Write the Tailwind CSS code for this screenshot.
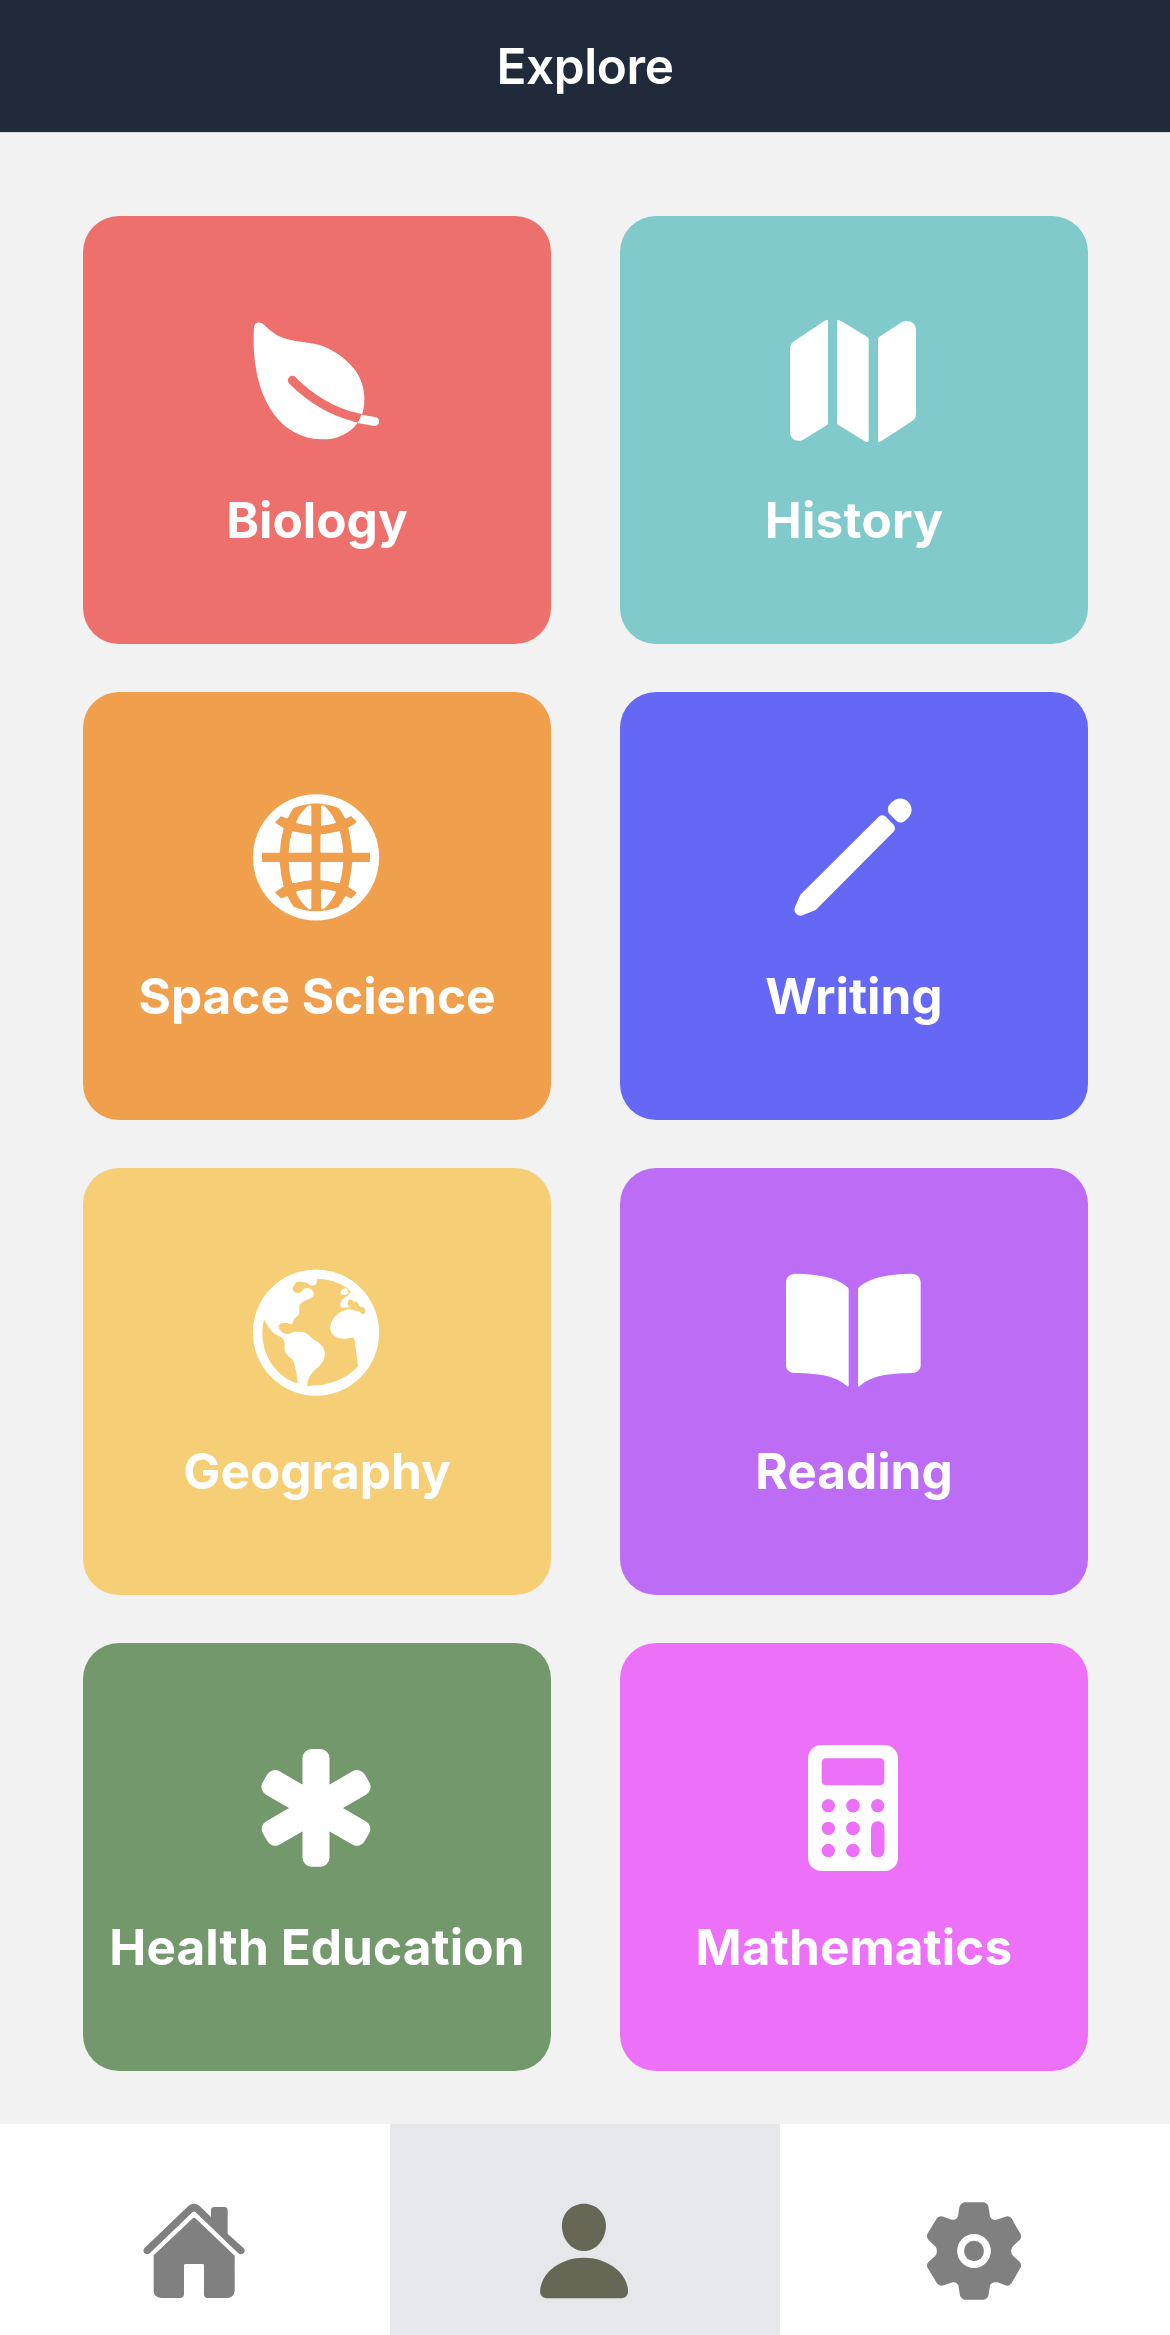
<!DOCTYPE html>
<html lang="en">
<head>
<meta charset="utf-8">
<title>Explore</title>
<script src="https://cdn.jsdelivr.net/npm/@tailwindcss/browser@4"></script>
</head>
<body class="flex h-[2335px] w-[1170px] flex-col overflow-hidden bg-[#f2f2f2] font-['Inter',sans-serif] text-[49.5px] leading-[60px] text-white">
<header class="flex h-[133px] shrink-0 items-center justify-center border-b border-[#d8d8da] bg-[#202a3a]">
  <h1 class="font-semibold tracking-[-0.4px]">Explore</h1>
</header>

<main class="grid flex-1 grid-cols-[468px_468px] content-start gap-x-[69px] gap-y-12 pl-[83px] pt-[83.33px] font-bold">
  <section class="flex h-[427.67px] flex-col items-center gap-[40px] rounded-[36px] bg-[#ed706d] pt-[89.67px]">
    <svg class="size-36 shrink-0" viewBox="555 348 432 432" fill="none">
      <path fill="#fff" d="M582 412C583 397 600 392 612 404C638 430 661 445 704 452C756 460 780 460 817 482C875 515 913 562 913 625C913 645 911 659 906 674L893 698C868 732 830 748 788 748C726 747 679 721 643 674C594 609 576 515 582 412Z"/>
      <path stroke="#ed706d" stroke-width="27" stroke-linecap="round" d="M697 571Q783 657 888 682"/>
      <path fill="#ed706d" d="M884 667L906 673L893 698L878 694Z"/>
      <path fill="#fff" d="M905 674L945 681A13.500 13.500 0 0 1 943 708L893 699Z"/>
    </svg>
    <h2>Biology</h2>
  </section>

  <section class="flex h-[427.67px] flex-col items-center gap-[40px] rounded-[36px] bg-[#81cacb] pt-[89.67px]">
    <svg class="size-36 shrink-0" viewBox="546 348 432 432" fill="#fff">
      <path d="M674 392Q679 389 684 390V700Q684 703 680 706L612 748C594 759 570 749 570 727V476Q570 462 582 454Z"/>
      <path d="M711 390Q716 389 722 392L802 441Q806 444 806 448V754Q802 758 797 755L715 705Q711 702 711 698Z"/>
      <path d="M834 447Q834 443 838 440L905 397C924 386 948 397 948 419V671Q948 684 938 692L843 754Q837 758 834 754Z"/>
    </svg>
    <h2 class="tracking-[0.25px]">History</h2>
  </section>

  <section class="flex h-[427.67px] flex-col items-center gap-[40px] rounded-[36px] bg-[#f09f4c] pt-[89.67px]">
    <svg class="size-36 shrink-0" viewBox="555 335 432 432" fill="none">
      <circle cx="768" cy="561" r="189.500" fill="#fff"/>
      <g fill="#f09f4c">
        <path d="M754 400H782V722H754Z"/>
        <rect x="606" y="547" width="324" height="28" rx="3"/>
        <g id="globe-cap">
          <path d="M701 413Q768 386 836 413Q845 424 854 442Q856 445 860 444L873 437L889 453Q889 456 888 457L865 472Q873 510 877 548H850Q847 512 839 483Q768 503 697 483Q688 512 686 548H659Q662 507 671 474L646 457V454L663 438L677 443Q682 446 685 440Q693 424 701 413Z"/>
          <path fill="#fff" d="M754 406V466Q731 465 711 459Q707 458 709 454Q723 422 747 405ZM783 406V466Q805 465 825 459Q829 458 827 454Q811 421 790 405ZM697 483L754 494V543Q754 547 751 547H687Q688 514 697 483ZM839 483L782 494V543Q782 547 786 547H849Q848 514 839 483Z"/>
        </g>
        <use href="#globe-cap" transform="matrix(1 0 0 -1 0 1122)"/>
        <path d="M686 547H850V575H686Z"/>
      </g>
    </svg>
    <h2>Space Science</h2>
  </section>

  <section class="flex h-[427.67px] flex-col items-center gap-[40px] rounded-[36px] bg-[#6567f5] pt-[89.67px]">
    <svg class="size-36 shrink-0" viewBox="66 35 432 432" fill="#fff">
      <path d="M356 139Q366 131 376 138L401 163Q408 173 402 183L167 419L128 435C114 440 98 425 105 410L121 373Z"/>
      <path d="M395 96C411 80 431 81 445 95C459 110 458 130 442 145L434 152Q422 161 410 152L388 130Q379 118 387 105Z"/>
    </svg>
    <h2>Writing</h2>
  </section>

  <section class="flex h-[427.67px] flex-col items-center gap-[40px] rounded-[36px] bg-[#f6ce76] pt-[89.67px]">
    <svg class="size-36 shrink-0" viewBox="45 22 432 432">
      <circle cx="258" cy="249" r="189.500" fill="#fff"/>
      <g fill="#f6ce76">
        <path d="M261 87Q313 88 354 116L356 121L363 126L359 136Q349 140 341 149C333 155 329 161 331 168C333 177 346 174 356 173C366 172 369 183 382 183C389 184 391 192 398 193C406 193 408 184 404 176C400 169 391 173 387 169C385 162 382 156 374 156C366 157 368 171 359 170C350 169 357 157 357 151L360 137L363 126L400 176L404 190L390 188Q381 180 362 179C345 179 332 185 322 194C307 208 300 221 301 238C302 258 325 269 345 267L368 264Q373 264 374 271L384 350Q330 409 231 409C233 394 236 382 246 370C258 356 276 347 283 325C289 304 278 286 260 275C243 268 239 252 222 248L202 246C189 243 181 256 168 253C158 249 146 242 146 231C147 220 160 217 171 220C179 222 188 229 189 217C191 208 194 205 202 200C212 192 206 178 208 169C212 153 241 151 250 140C256 128 245 117 233 115C218 113 218 131 201 130C191 129 185 119 190 110C197 106 192 96 204 96C214 95 223 99 231 99C237 105 245 111 253 107C262 103 260 94 261 87Z"/>
        <path d="M102 209C108 220 116 234 125 245C139 260 160 260 163 277C166 292 160 304 172 316C180 326 188 327 192 339Q201 368 203 401C143 383 97 323 97 249Q97 229 102 209Z"/>
      </g>
      <path fill="#fff" d="M331 126C335 118 347 112 353 118C350 127 362 132 351 134C342 137 330 137 331 126ZM363 126L420 176L414 198L404 190C410 174 394 171 388 171C386 160 382 155 374 156C366 157 368 171 359 170C350 169 357 158 357 151L334 152Q354 139 363 126Z"/>
      <path fill="#f6ce76" d="M357 149L372 153Q365 160 365 169Q357 175 354 167Q352 160 357 149ZM374 156C385 155 384 164 388 170C392 175 402 168 406 180C407 189 401 195 396 192C391 189 391 184 384 184L364 181L362 172Q367 164 368 159Z"/>
    </svg>
    <h2>Geography</h2>
  </section>

  <section class="flex h-[427.67px] flex-col items-center gap-[40px] rounded-[36px] bg-[#bd6cf6] pt-[89.67px]">
    <svg class="size-36 shrink-0" viewBox="126 22 432 432" fill="#fff">
      <path id="page" d="M326 117V407Q326 413 321 409C285 379 247 372 163 370C147 369 138 360 138 347V98C138 83 150 72 166 72C240 74 289 83 321 111Q326 115 326 117Z"/>
      <use href="#page" transform="matrix(-1 0 0 1 680 0)"/>
    </svg>
    <h2>Reading</h2>
  </section>

  <section class="flex h-[427.67px] flex-col items-center gap-[40px] rounded-[36px] bg-[#72986c] pt-[89.67px]">
    <svg class="size-36 shrink-0" viewBox="495 39 432 432" fill="#fff">
      <rect x="667.500" y="87" width="81" height="353" rx="27"/>
      <rect x="667.500" y="87" width="81" height="353" rx="27" transform="rotate(60 708 264)"/>
      <rect x="667.500" y="87" width="81" height="353" rx="27" transform="rotate(-60 708 264)"/>
    </svg>
    <h2 class="tracking-[0.1px]">Health Education</h2>
  </section>

  <section class="flex h-[427.67px] flex-col items-center gap-[40px] rounded-[36px] bg-[#ed70f8] pt-[89.67px]">
    <svg class="size-36 shrink-0" viewBox="306 39 432 432" fill="#ed70f8">
      <rect x="384" y="75" width="270" height="378" rx="40" fill="#fff"/>
      <rect x="425" y="115" width="188" height="81" rx="13"/>
      <circle cx="445" cy="257" r="20"/><circle cx="519" cy="257" r="20.500"/><circle cx="593" cy="257" r="20"/>
      <circle cx="445" cy="325" r="20"/><circle cx="519" cy="325" r="20.500"/>
      <circle cx="445" cy="391.500" r="20"/><circle cx="519" cy="391.500" r="20.500"/>
      <rect x="573" y="304" width="40.500" height="108" rx="20"/>
    </svg>
    <h2 class="tracking-[0.1px]">Mathematics</h2>
  </section>
</main>

<nav class="grid h-[211px] shrink-0 grid-cols-3 bg-white">
  <a class="flex justify-center pt-[66px]" aria-label="Home">
    <svg class="size-[120px]" viewBox="105 240 360 360" fill="#808080">
      <path d="M265 288Q282 275 299 288L333 321V301Q333 291 343 291H373Q383 291 383 301V371L431 415C441 426 425 439 415 430L287 307Q282 302 277 307L150 429C140 439 124 426 133 415Z"/>
      <path d="M277 326Q282 321 288 326L404 437V543Q402 561 383 564H322Q313 563 312 554V466Q312 462 308 462H257Q252 462 252 466V553Q251 563 242 564H183Q163 561 161 545V436Z"/>
    </svg>
  </a>
  <a class="flex justify-center bg-[#e5e7eb] pt-[66px]" aria-label="Profile">
    <svg class="size-[120px]" viewBox="117.6 240 313.6 360" preserveAspectRatio="none" fill="#666754">
      <path d="M271.500 281C303 281 329 309 329 347C329 388 303 423 271.500 423C240 423 214 388 214 347C214 309 240 281 271.500 281Z"/>
      <path d="M271.500 443C334 443 387 490 387 546Q386 562 371 565H173Q158 562 157 546C157 490 209 443 271.500 443Z"/>
    </svg>
  </a>
  <a class="flex justify-center pt-[66px]" aria-label="Settings">
    <svg class="size-[120px]" viewBox="1136.8 240 313.6 360" preserveAspectRatio="none">
      <path fill="#808080" d="M1266 277H1317Q1327 280 1329 291L1333 320Q1338 330 1348 330L1373 320Q1383 316 1389 325L1413 373Q1416 382 1411 389L1393 408Q1388 414 1388 423Q1388 432 1393 437L1411 456Q1416 464 1413 472L1389 520Q1383 530 1373 526L1352 517Q1337 515 1333 526L1329 554Q1327 566 1317 569H1266Q1256 565 1254 554L1250 526Q1245 515 1235 517L1212 526Q1201 530 1194 520L1169 472Q1166 464 1172 456L1190 437Q1194 432 1194 423Q1194 414 1190 409L1172 390Q1166 381 1169 372L1194 325Q1200 316 1211 320L1232 329Q1244 331 1249 320L1253 291Q1256 280 1266 277Z"/>
      <ellipse cx="1291" cy="423" rx="44" ry="51" fill="#fff"/>
      <ellipse cx="1291" cy="423" rx="26" ry="30.500" fill="#808080"/>
    </svg>
  </a>
</nav>
</body>
</html>
